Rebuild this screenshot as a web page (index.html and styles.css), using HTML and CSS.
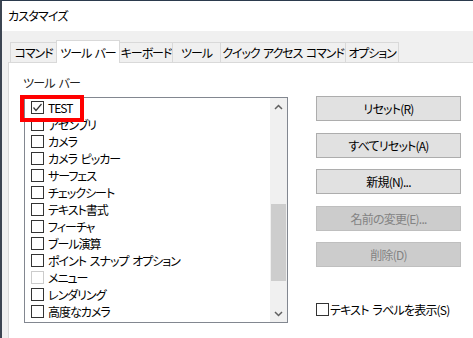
FILE: index.html
```html
<!DOCTYPE html>
<html lang="ja">
<head>
    <meta charset="UTF-8">
    <title>カスタマイズ</title>
    <link rel="stylesheet" href="styles.css">
</head>
<body>
    <div class="window">
        <div class="title-bar">カスタマイズ</div>
        <div class="client">
            <div class="tabs">
                <div class="tab t-cmd">コマンド</div>
                <div class="tab tab-active t-bar">ツール バー</div>
                <div class="tab t-key">キーボード</div>
                <div class="tab t-tool">ツール</div>
                <div class="tab t-quick">クイック アクセス コマンド</div>
                <div class="tab t-opt">オプション</div>
            </div>
            <div class="panel">
                <div class="group-label">ツール バー</div>
                <div class="list-box">
                    <div class="list-items">
                        <div class="list-item"><span class="check checked"><svg width="11" height="11" viewBox="0 0 11 11"><polyline points="1.5,5.5 4,8.5 9.5,2" fill="none" stroke="#333" stroke-width="1.2"/></svg></span>TEST</div>
                        <div class="list-item"><span class="check"></span>アセンブリ</div>
                        <div class="list-item"><span class="check"></span>カメラ</div>
                        <div class="list-item"><span class="check"></span>カメラ ピッカー</div>
                        <div class="list-item"><span class="check"></span>サーフェス</div>
                        <div class="list-item"><span class="check"></span>チェックシート</div>
                        <div class="list-item"><span class="check"></span>テキスト書式</div>
                        <div class="list-item"><span class="check"></span>フィーチャ</div>
                        <div class="list-item"><span class="check"></span>ブール演算</div>
                        <div class="list-item"><span class="check"></span>ポイント スナップ オプション</div>
                        <div class="list-item"><span class="check check-disabled"></span>メニュー</div>
                        <div class="list-item"><span class="check"></span>レンダリング</div>
                        <div class="list-item"><span class="check"></span>高度なカメラ</div>
                    </div>
                    <div class="scrollbar">
                        <div class="scroll-arrow"><svg width="9" height="6" viewBox="0 0 9 6"><polyline points="1,5 4.5,1.5 8,5" fill="none" stroke="#606060" stroke-width="1.5"/></svg></div>
                        <div class="scroll-track"><div class="scroll-thumb"></div></div>
                        <div class="scroll-arrow"><svg width="9" height="6" viewBox="0 0 9 6"><polyline points="1,1 4.5,4.5 8,1" fill="none" stroke="#606060" stroke-width="1.5"/></svg></div>
                    </div>
                    <div class="highlight"></div>
                </div>
                <div class="buttons">
                    <div class="button">リセット(R)</div>
                    <div class="button">すべてリセット(A)</div>
                    <div class="button">新規(N)...</div>
                    <div class="button button-disabled">名前の変更(E)...</div>
                    <div class="button button-disabled">削除(D)</div>
                    <div class="text-label-option"><span class="check"></span>テキスト ラベルを表示(S)</div>
                </div>
            </div>
        </div>
    </div>
</body>
</html>
```

FILE: styles.css
```css
body {
    margin: 0;
    width: 473px;
    height: 338px;
    overflow: hidden;
    font-family: "Noto Sans CJK JP", "Noto Sans", sans-serif;
    font-size: 12px;
    font-feature-settings: "palt";
    letter-spacing: -0.8px;
    word-spacing: 2px;
    color: #000;
    background-color: #f0f0f0;
}
.window {
    height: 337px;
    border-top: 1px solid #2b3a4d;
    border-left: 2px solid #3c4552;
    background-color: #f0f0f0;
    display: flex;
    flex-direction: column;
}
.title-bar {
    height: 30px;
    line-height: 29px;
    padding-left: 6px;
    background-color: #fff;
}
.client {
    flex: 1;
    padding: 9px 0 0 6px;
    display: flex;
    flex-direction: column;
}
.tabs {
    display: flex;
    align-items: flex-end;
    height: 22px;
    margin-left: 2px;
    position: relative;
    z-index: 1;
}
.tab {
    box-sizing: border-box;
    height: 20px;
    line-height: 19px;
    border: 1px solid #d9d9d9;
    border-bottom: none;
    margin-right: -1px;
    text-align: center;
    background-color: #f0f0f0;
    white-space: nowrap;
    letter-spacing: -1.1px;
}
.tab-active {
    height: 23px;
    line-height: 23px;
    background-color: #fff;
    margin-bottom: -1px;
    position: relative;
}
.t-cmd { width: 47px; }
.t-bar { width: 64px; }
.t-key { width: 54px; }
.t-tool { width: 49px; }
.t-quick { width: 126px; }
.t-opt { width: 54px; }
.panel {
    flex: 1;
    background-color: #fff;
    border: 1px solid #d9d9d9;
    border-right: none;
    border-bottom: none;
    padding: 12px 0 0 15px;
    display: grid;
    grid-template-columns: 264px 145px;
    grid-template-rows: 16px auto;
    column-gap: 28px;
    align-content: start;
}
.group-label {
    line-height: 16px;
    margin-left: -1px;
    color: #222;
}
.list-box {
    grid-column: 1;
    grid-row: 2;
    margin-top: 6px;
    height: 224px;
    border: 1px solid #828790;
    display: flex;
    position: relative;
}
.list-items {
    flex: 1;
    padding: 1px 0 0 6px;
}
.list-item {
    height: 17px;
    display: flex;
    align-items: center;
    white-space: nowrap;
    line-height: 17px;
    letter-spacing: -1px;
}
.check {
    width: 11px;
    height: 11px;
    border: 1px solid #333;
    margin-right: 4px;
    flex-shrink: 0;
    display: flex;
    align-items: center;
    justify-content: center;
    background-color: #fff;
}
.check-disabled {
    border-color: #cccccc;
}
.scrollbar {
    width: 17px;
    background-color: #f0f0f0;
    display: flex;
    flex-direction: column;
}
.scroll-arrow {
    height: 17px;
    display: flex;
    align-items: center;
    justify-content: center;
}
.scroll-track {
    flex: 1;
    position: relative;
}
.scroll-thumb {
    position: absolute;
    left: 1px;
    right: 1px;
    top: 89px;
    height: 77px;
    background-color: #cdcdcd;
}
.highlight {
    position: absolute;
    left: -5px;
    top: -3px;
    width: 56px;
    height: 19px;
    border: 4px solid #ff0000;
}
.buttons {
    grid-column: 2;
    grid-row: 2;
    margin-top: 5px;
    display: flex;
    flex-direction: column;
    gap: 11.5px;
}
.button {
    height: 23px;
    line-height: 23px;
    border: 1px solid #adadad;
    background-color: #e1e1e1;
    text-align: center;
}
.button-disabled {
    background-color: #cccccc;
    border-color: #bfbfbf;
    color: #838383;
}
.text-label-option {
    margin-top: 23px;
    display: flex;
    align-items: center;
    white-space: nowrap;
    height: 15px;
}
.text-label-option .check {
    margin-right: 1px;
}
```
